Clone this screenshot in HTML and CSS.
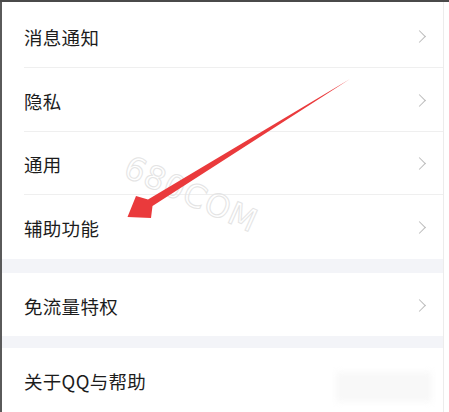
FILE: index.html
```html
<!DOCTYPE html>
<html lang="zh-CN">
<head>
    <meta charset="UTF-8">
    <meta name="viewport" content="width=device-width, initial-scale=1.0">
    <title>设置</title>
    <link rel="stylesheet" href="styles.css">
</head>
<body>
    <div class="frame">
        <div class="panel">
            <div class="group first">
                <div class="row"><span class="label">消息通知</span><span class="chev"></span></div>
                <div class="row"><span class="label">隐私</span><span class="chev"></span></div>
                <div class="row"><span class="label">通用</span><span class="chev"></span></div>
                <div class="row last"><span class="label">辅助功能</span><span class="chev"></span></div>
            </div>
            <div class="gap"></div>
            <div class="group">
                <div class="row last"><span class="label">免流量特权</span><span class="chev"></span></div>
            </div>
            <div class="gap small"></div>
            <div class="group">
                <div class="row last"><span class="label">关于QQ与帮助</span></div>
            </div>
        </div>

        <div class="watermark">680COM</div>
        <div class="smudge"></div>

        <svg class="arrow" width="449" height="412" viewBox="0 0 449 412">
            <path d="M350,79 L148,199.5 L136,196 L127.5,217 L151,218 L152.5,206 Z" fill="#ea3a3c"/>
        </svg>
    </div>
</body>
</html>
```

FILE: styles.css
```css
html, body{
    margin: 0;
    padding: 0;
    background-color: #fff;
}
body{
    font-family: "Noto Sans CJK SC", "Noto Sans", sans-serif;
    color: #1c1c1c;
}
.frame{
    position: relative;
    width: 449px;
    height: 412px;
    overflow: hidden;
    border-top: 2px solid #4a4a4a;
    box-sizing: border-box;
}
.panel{
    width: 441px;
    height: 410px;
    border-left: 2px solid #5a5a5a;
    border-right: 1px solid #ececec;
    padding-top: 2.5px;
    box-sizing: content-box;
}
.group{
    background-color: #fff;
}
.row{
    height: 62.5px;
    margin-left: 22px;
    padding-right: 16px;
    display: flex;
    align-items: center;
    justify-content: space-between;
    border-bottom: 1px solid #efefef;
}
.row.last{
    border-bottom: none;
    height: 63.5px;
}
.label{
    font-size: 18.5px;
    padding-top: 3px;
    letter-spacing: 0.3px;
}
.chev{
    width: 8px;
    height: 8px;
    border-top: 1.6px solid #bbb;
    border-right: 1.6px solid #bbb;
    transform: rotate(45deg);
    margin-right: 3px;
    margin-top: 2px;
}
.gap{
    height: 14px;
    background-color: #f3f4f8;
}
.gap.small{
    height: 12px;
}
.watermark{
    position: absolute;
    left: 134px;
    top: 146px;
    font-family: "DejaVu Sans", sans-serif;
    font-size: 32px;
    letter-spacing: 1px;
    color: transparent;
    -webkit-text-stroke: 1px #e4e4e4;
    transform: rotate(24deg);
    transform-origin: left top;
}
.smudge{
    position: absolute;
    left: 336px;
    top: 370px;
    width: 96px;
    height: 30px;
    background-color: #f8f8f8;
    filter: blur(3px);
}
.arrow{
    position: absolute;
    left: 0;
    top: -2px;
}
```
